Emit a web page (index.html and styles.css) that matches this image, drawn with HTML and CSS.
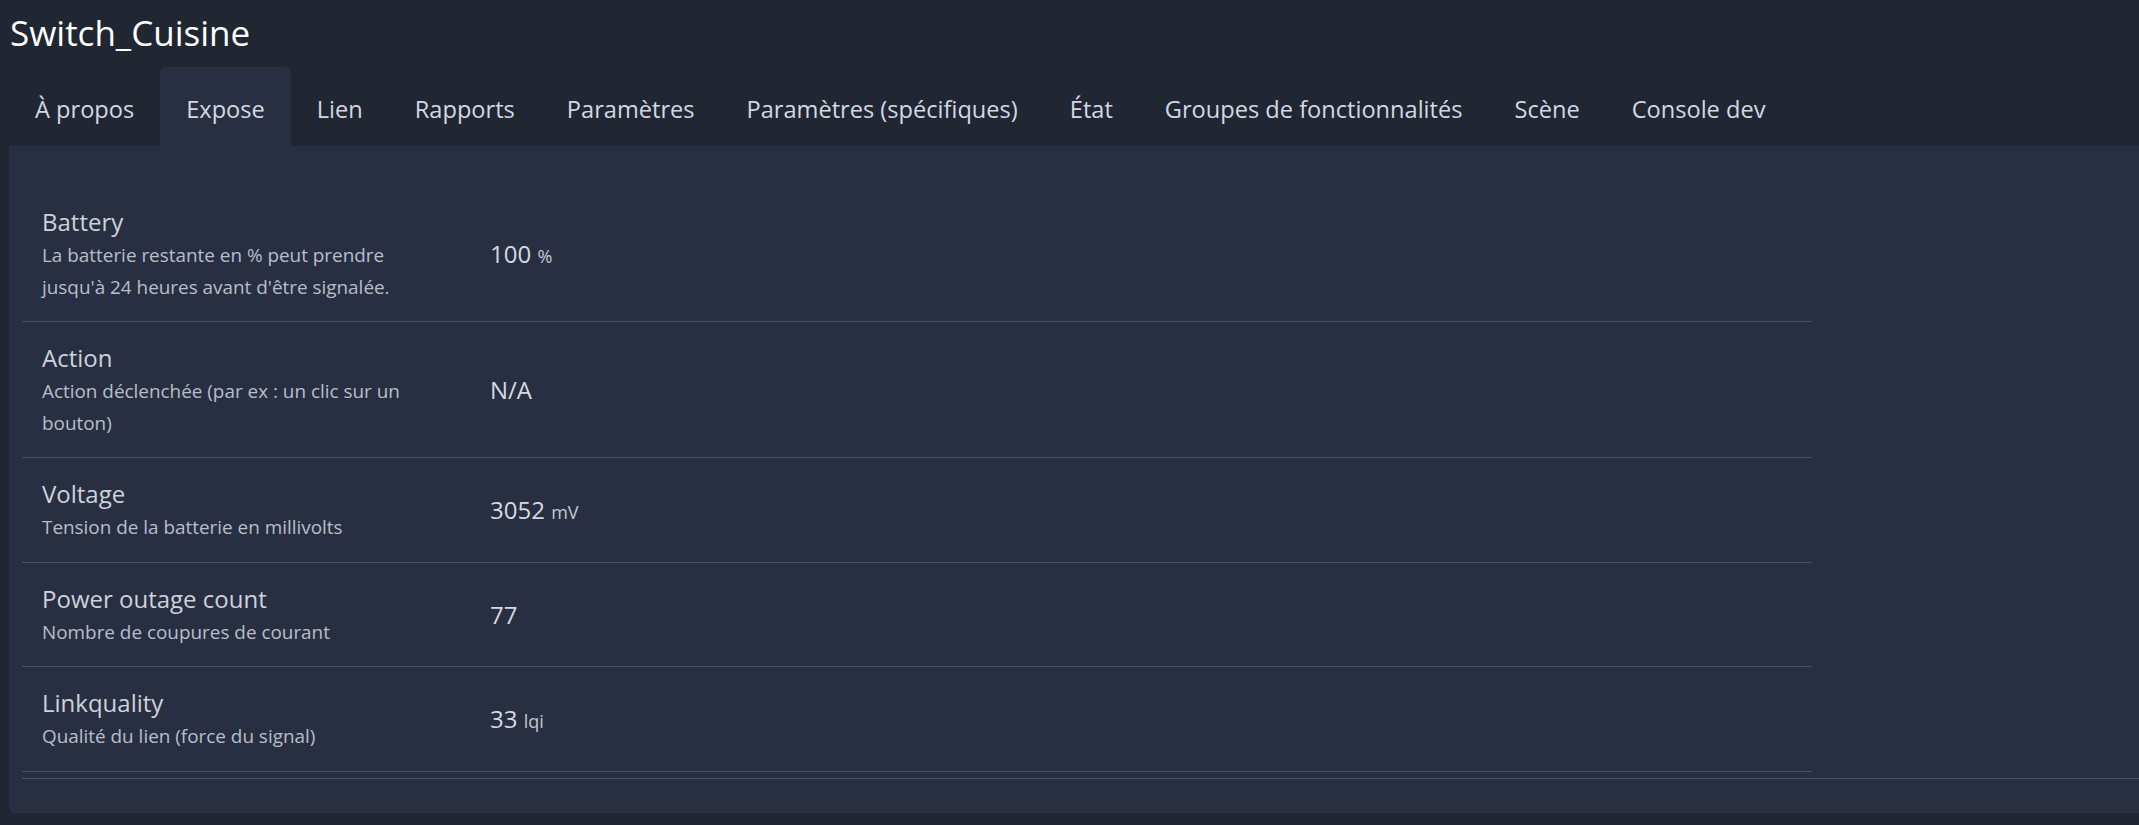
FILE: index.html
```html
<!DOCTYPE html>
<html lang="fr">
<head>
    <meta charset="UTF-8">
    <title>Switch_Cuisine</title>
    <link rel="stylesheet" href="styles.css">
</head>
<body>
    <h1 class="device-title">Switch_Cuisine</h1>

    <ul class="tabs">
        <li class="tab">À propos</li>
        <li class="tab active">Expose</li>
        <li class="tab">Lien</li>
        <li class="tab">Rapports</li>
        <li class="tab">Paramètres</li>
        <li class="tab">Paramètres (spécifiques)</li>
        <li class="tab">État</li>
        <li class="tab">Groupes de fonctionnalités</li>
        <li class="tab">Scène</li>
        <li class="tab">Console dev</li>
    </ul>

    <div class="panel">
        <div class="expose-list">
            <div class="expose-row">
                <div class="expose-label">
                    <div class="expose-name">Battery</div>
                    <div class="expose-desc">La batterie restante en % peut prendre jusqu'à 24 heures avant d'être signalée.</div>
                </div>
                <div class="expose-value">100 <span class="unit">%</span></div>
            </div>
            <div class="expose-row">
                <div class="expose-label">
                    <div class="expose-name">Action</div>
                    <div class="expose-desc">Action déclenchée (par ex : un clic sur un bouton)</div>
                </div>
                <div class="expose-value">N/A</div>
            </div>
            <div class="expose-row">
                <div class="expose-label">
                    <div class="expose-name">Voltage</div>
                    <div class="expose-desc">Tension de la batterie en millivolts</div>
                </div>
                <div class="expose-value">3052 <span class="unit">mV</span></div>
            </div>
            <div class="expose-row">
                <div class="expose-label">
                    <div class="expose-name">Power outage count</div>
                    <div class="expose-desc">Nombre de coupures de courant</div>
                </div>
                <div class="expose-value">77</div>
            </div>
            <div class="expose-row">
                <div class="expose-label">
                    <div class="expose-name">Linkquality</div>
                    <div class="expose-desc">Qualité du lien (force du signal)</div>
                </div>
                <div class="expose-value">33 <span class="unit">lqi</span></div>
            </div>
        </div>
        <hr class="panel-rule">
    </div>
</body>
</html>
```

FILE: styles.css
```css
body {
    margin: 0;
    padding: 0 0 12px 0;
    background-color: #212633;
    font-family: "Open Sans", Lato, sans-serif;
    color: #d0d5de;
    overflow: hidden;
}

.device-title {
    margin: 0;
    padding: 11px 0 0 10px;
    font-size: 35px;
    font-weight: 400;
    line-height: 43px;
    color: #ffffff;
}

.tabs {
    list-style: none;
    display: flex;
    margin: 13px 0 0 9px;
    padding: 0;
}

.tab {
    font-size: 23.6px;
    line-height: 36px;
    padding: 24px 26px 19px;
    color: #d3d8e1;
    border-radius: 6px 6px 0 0;
    white-space: nowrap;
}

.tab.active {
    background-color: #292f42;
}

.panel {
    background-color: #292f42;
    margin-left: 9px;
    padding: 40px 0 34px 13px;
    border-radius: 0 0 0 6px;
}

.expose-list {
    width: 1790px;
}

.expose-row {
    display: grid;
    grid-template-columns: 448px 1fr;
    align-items: center;
    border-bottom: 1px solid #4b5164;
}

.expose-label {
    padding: 18px 30px 18px 20px;
}

.expose-name {
    font-size: 24px;
    line-height: 36px;
    color: #cdd2db;
}

.expose-desc {
    font-size: 18.9px;
    line-height: 31.5px;
    color: #b8bec9;
}

.expose-value {
    padding: 0 20px;
    font-size: 24px;
    color: #d5d9e1;
}

.unit {
    font-size: 18px;
    color: #c3c8d1;
}

.panel-rule {
    margin: 6px 0 0 0;
    border: none;
    border-top: 1px solid #4b5164;
}
```
